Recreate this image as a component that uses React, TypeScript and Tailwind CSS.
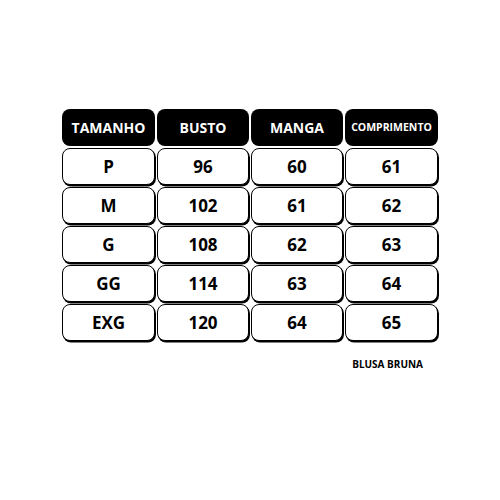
const headers = [
  { label: 'TAMANHO', size: 'text-[14px]' },
  { label: 'BUSTO', size: 'text-[14px]' },
  { label: 'MANGA', size: 'text-[14px]' },
  { label: 'COMPRIMENTO', size: 'text-[10.5px]' },
]

const rows = [
  ['P', '96', '60', '61'],
  ['M', '102', '61', '62'],
  ['G', '108', '62', '63'],
  ['GG', '114', '63', '64'],
  ['EXG', '120', '64', '65'],
]

export default function App() {
  return (
    <div
      className="w-[500px] h-[500px] bg-white pt-[109px] pl-[62px]"
      style={{ fontFamily: '"Open Sans", "Noto Sans", sans-serif' }}
    >
      <div className="w-[376px]">
        <div className="grid grid-cols-[93px_92px_92px_93px] auto-rows-[37px] gap-[2px]">
          {headers.map((h) => (
            <div
              key={h.label}
              className={`bg-black text-white font-bold rounded-[8px] flex items-center justify-center ${h.size}`}
            >
              {h.label}
            </div>
          ))}
          {rows.map((row) =>
            row.map((cell, i) => (
              <div
                key={row[0] + i}
                className="bg-white border border-black rounded-[8px] shadow-[1px_1.5px_0_#000] flex items-center justify-center text-[17px] font-bold text-black"
              >
                {cell}
              </div>
            ))
          )}
        </div>
        <div className="flex justify-end pr-[15px] mt-[16px]">
          <span className="text-[10px] font-bold text-black">BLUSA BRUNA</span>
        </div>
      </div>
    </div>
  )
}
